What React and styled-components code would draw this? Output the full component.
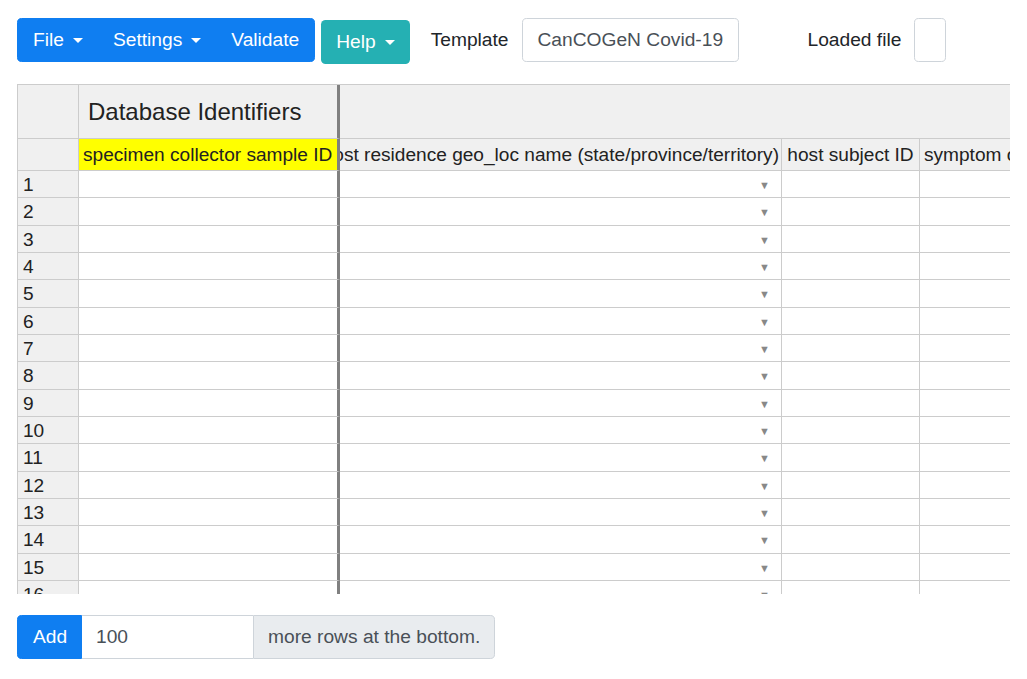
import React from 'react';
import styled, { createGlobalStyle } from 'styled-components';

const GlobalStyle = createGlobalStyle`
  html, body {
    margin: 0;
    padding: 0;
    background: #fff;
  }
  body {
    font-family: "Liberation Sans", Arial, sans-serif;
    color: #212529;
  }
`;

const Page = styled.div`
  padding: 18px 0 0 17px;
  width: 1010px;
  box-sizing: border-box;
`;

const Toolbar = styled.div`
  display: flex;
  align-items: flex-start;
  height: 46px;
`;

const BtnGroup = styled.div`
  display: inline-flex;
  background: #0f7ef1;
  border: 1px solid #0f7ef1;
  border-radius: 4.6px;
  height: 44px;
  box-sizing: border-box;
`;

const Button = styled.button`
  display: inline-flex;
  align-items: center;
  height: 100%;
  padding: 0 15px;
  border: none;
  background: transparent;
  color: #fff;
  font-family: inherit;
  font-size: 19.2px;
  line-height: 1.5;
  cursor: pointer;
`;

const HelpButton = styled(Button)`
  height: 44px;
  margin-top: 2px;
  margin-left: 6px;
  background: #25b0b3;
  border-radius: 4.6px;
`;

const Caret = styled.span`
  display: inline-block;
  margin-left: 9px;
  margin-top: 1px;
  width: 0;
  height: 0;
  border-top: 5.5px solid #fff;
  border-left: 5.5px solid transparent;
  border-right: 5.5px solid transparent;
`;

const Label = styled.span`
  font-size: 19.2px;
  line-height: 44px;
  margin-left: ${(p) => p.$ml}px;
  margin-right: 13px;
`;

const Field = styled.div`
  height: 44px;
  width: ${(p) => p.$w}px;
  box-sizing: border-box;
  border: 1px solid #ced4da;
  border-radius: 4.6px;
  padding: 0 15px;
  display: flex;
  align-items: center;
  font-size: 19.2px;
  color: #495057;
  white-space: nowrap;
`;

const Viewport = styled.div`
  margin-top: 20px;
  width: 993px;
  height: 510px;
  overflow: hidden;
  border-top: 1px solid #ccc;
  border-left: 1px solid #ccc;
  box-sizing: border-box;
`;

const Grid = styled.div`
  display: grid;
  grid-template-columns: 61px 261px 442px 138px 220px;
  grid-template-rows: 54px 32px;
  grid-auto-rows: 27.33px;
  width: max-content;
`;

const Cell = styled.div`
  box-sizing: border-box;
  border-right: ${(p) => (p.$thick ? '3px solid #808080' : '1px solid #ccc')};
  border-bottom: 1px solid #ccc;
  background: ${(p) => p.$bg || '#fff'};
  grid-column: ${(p) => p.$span || 'auto'};
  overflow: hidden;
  white-space: nowrap;
  display: flex;
  align-items: center;
  font-size: 19.1px;
  color: #222;
`;

const GroupTitle = styled.span`
  font-size: 24px;
  padding-left: 9px;
  color: #222;
`;

const HeadText = styled.span`
  flex: 1;
  display: flex;
  justify-content: ${(p) => p.$align || 'center'};
  padding: 0 ${(p) => p.$pad ?? 4}px;
  overflow: hidden;
`;

const RowNum = styled.span`
  padding-left: 5px;
  padding-top: 2px;
`;

const Arrow = styled.span`
  margin-left: auto;
  margin-right: 11px;
  font-size: 11px;
  color: #888;
  padding-top: 2px;
`;

const AddRow = styled.div`
  display: flex;
  margin-top: 21px;
  height: 44px;
`;

const AddButton = styled.button`
  background: #0f7ef1;
  color: #fff;
  border: 1px solid #0f7ef1;
  border-radius: 4.6px 0 0 4.6px;
  font-family: inherit;
  font-size: 19.2px;
  padding: 0 15px;
  height: 44px;
  width: 65px;
`;

const AddInput = styled.div`
  width: 171px;
  height: 44px;
  box-sizing: border-box;
  border: 1px solid #ced4da;
  border-left: none;
  border-right: none;
  padding: 0 14px;
  display: flex;
  align-items: center;
  font-size: 19.2px;
  color: #495057;
`;

const AddOn = styled.div`
  height: 44px;
  box-sizing: border-box;
  background: #e9ecef;
  border: 1px solid #ced4da;
  border-radius: 0 4.6px 4.6px 0;
  padding: 0 14px;
  display: flex;
  align-items: center;
  font-size: 19.2px;
  color: #495057;
  white-space: nowrap;
`;

const rows = Array.from({ length: 18 }, (_, i) => i + 1);

export default function App() {
  return (
    <>
      <GlobalStyle />
      <Page>
        <Toolbar>
          <BtnGroup>
            <Button>File<Caret /></Button>
            <Button>Settings<Caret /></Button>
            <Button>Validate</Button>
          </BtnGroup>
          <HelpButton>Help<Caret /></HelpButton>
          <Label $ml={21}>Template</Label>
          <Field $w={217}>CanCOGeN Covid-19</Field>
          <Label $ml={69}>Loaded file</Label>
          <Field $w={30} />
        </Toolbar>

        <Viewport>
          <Grid>
            <Cell $bg="#f0f0f0" />
            <Cell $bg="#f0f0f0" $thick>
              <GroupTitle>Database Identifiers</GroupTitle>
            </Cell>
            <Cell $bg="#f0f0f0" $span="span 3" />

            <Cell $bg="#f0f0f0" />
            <Cell $bg="#ffff00" $thick>
              <HeadText $align="flex-start">specimen collector sample ID</HeadText>
            </Cell>
            <Cell $bg="#f0f0f0">
              <HeadText $align="flex-end" $pad={2}>host residence geo_loc name (state/province/territory)</HeadText>
            </Cell>
            <Cell $bg="#f0f0f0">
              <HeadText>host subject ID</HeadText>
            </Cell>
            <Cell $bg="#f0f0f0">
              <HeadText $align="flex-start">symptom onset date</HeadText>
            </Cell>

            {rows.map((n) => (
              <React.Fragment key={n}>
                <Cell $bg="#f0f0f0"><RowNum>{n}</RowNum></Cell>
                <Cell $thick />
                <Cell><Arrow>▼</Arrow></Cell>
                <Cell />
                <Cell />
              </React.Fragment>
            ))}
          </Grid>
        </Viewport>

        <AddRow>
          <AddButton>Add</AddButton>
          <AddInput>100</AddInput>
          <AddOn>more rows at the bottom.</AddOn>
        </AddRow>
      </Page>
    </>
  );
}
